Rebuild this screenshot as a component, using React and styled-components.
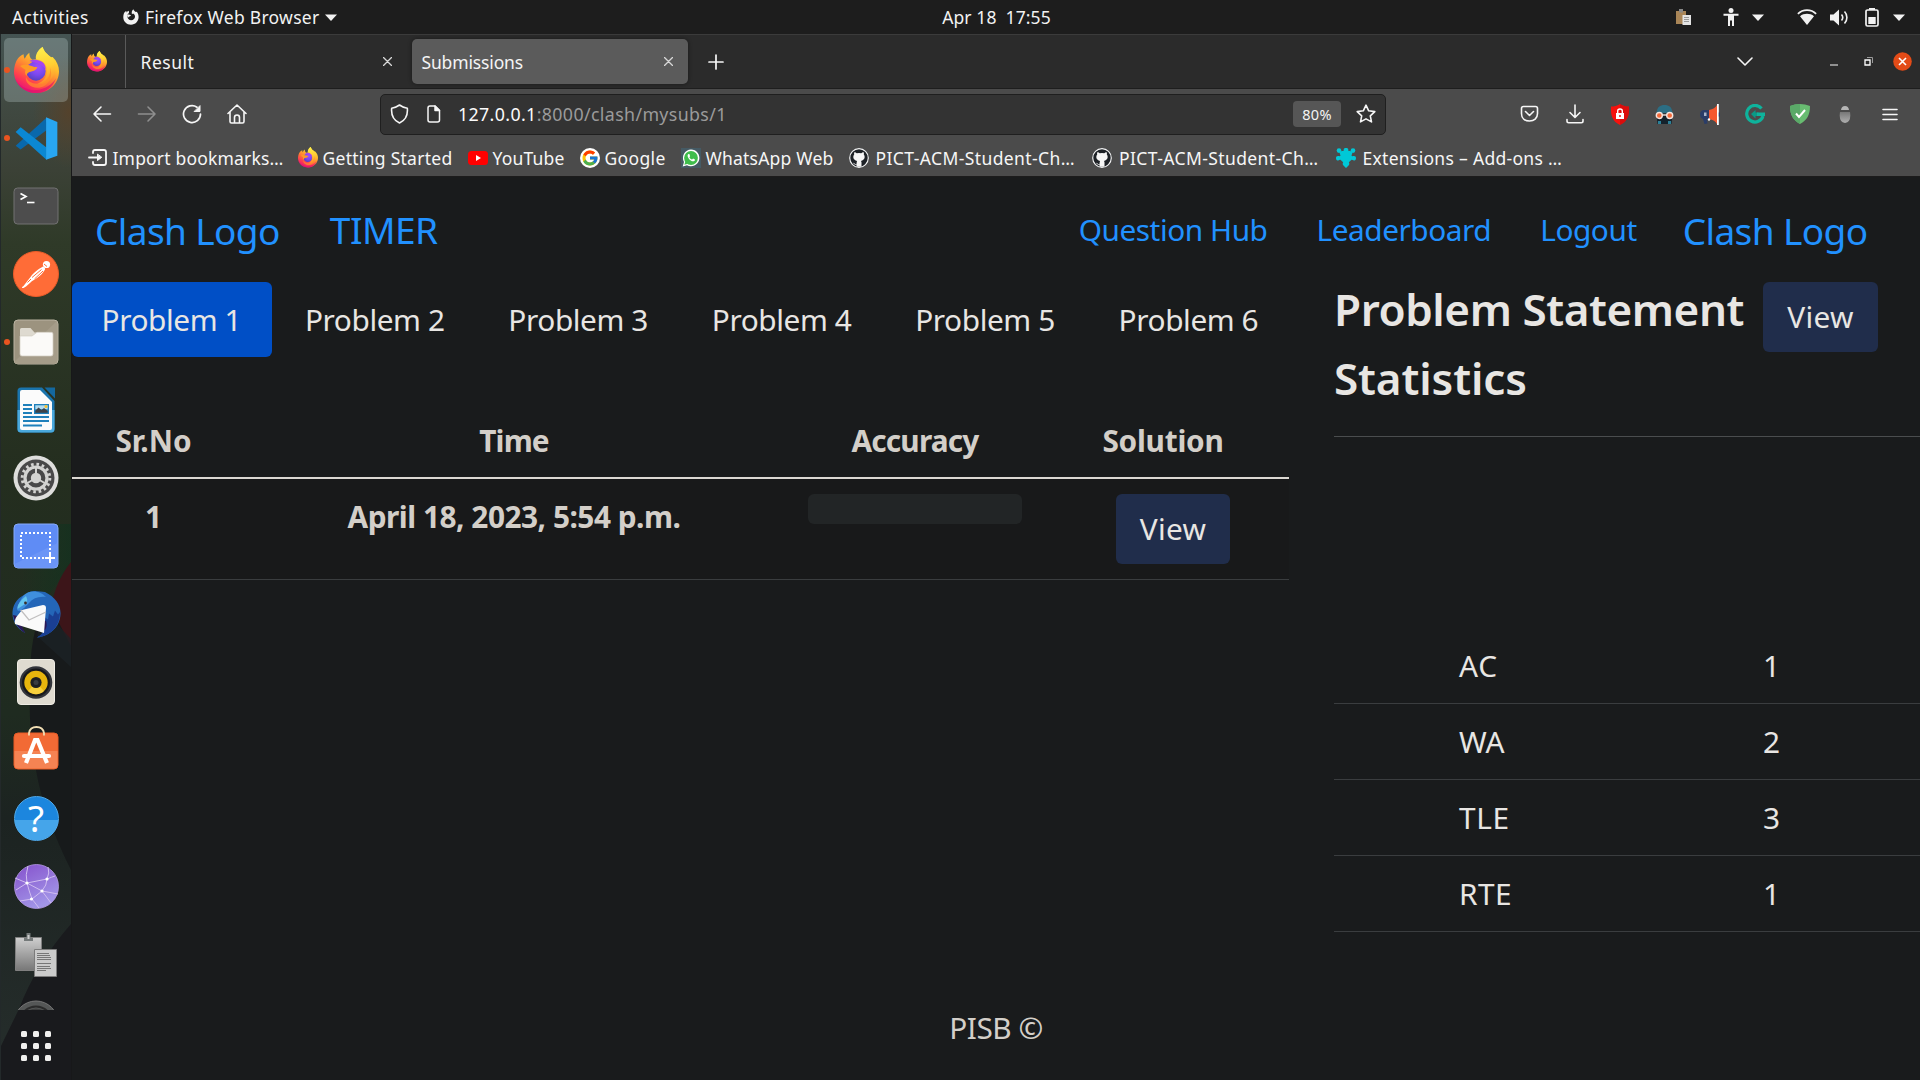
import React from "react";
import styled, { createGlobalStyle } from "styled-components";
import { FcGoogle } from "react-icons/fc";
import { FaGithub } from "react-icons/fa";

const Global = createGlobalStyle`
  *, *::before, *::after { box-sizing: border-box; }
  html, body { margin: 0; padding: 0; background: #1d1d1d; overflow: hidden; }
  body { font-family: "Noto Sans", "Open Sans", sans-serif; }
  svg { display: block; flex: none; }
`;

const Desktop = styled.div`
  width: 1920px;
  height: 1080px;
  display: grid;
  grid-template: 34px 1046px / 72px 1848px;
  overflow: hidden;
`;

/* ---------- system bar ---------- */
const SystemBar = styled.header`
  grid-column: 1 / -1;
  display: grid;
  grid-template-columns: 1fr auto 1fr;
  align-items: center;
  background: #1d1d1d;
  color: #f2f2f2;
  font-size: 17.5px;
  line-height: 34px;
`;
const SystemGroup = styled.div`
  display: flex;
  align-items: center;
  justify-content: ${(p) => (p.$end ? "flex-end" : "flex-start")};
  padding: ${(p) => (p.$end ? "0 15.5px 0 0" : "0 0 0 12px")};
`;
const SystemText = styled.span`
  white-space: pre;
  letter-spacing: ${(p) => p.$ls || 0}px;
  margin-left: ${(p) => p.$ml || 0}px;
`;
const Slot = styled.span`
  display: flex;
  margin-left: ${(p) => p.$ml || 0}px;
`;
const Clock = styled.div`
  display: flex;
  gap: 9px;
  margin-left: 73px;
  letter-spacing: 0.1px;
`;

/* ---------- dock ---------- */
const Dock = styled.nav`
  position: relative;
  display: flex;
  flex-direction: column;
  border-left: 1px solid #23292a;
  border-right: 1px solid #171819;
  background: #29332a;
`;
const Wallpaper = styled.div`
  position: absolute;
  inset: 0;
`;
const DockList = styled.div`
  position: relative;
  height: 976px;
  overflow: hidden;
  padding-top: 2px;
`;
const DockItem = styled.div`
  position: relative;
  height: 68.05px;
  display: flex;
  align-items: center;
  justify-content: center;
  padding-bottom: ${(p) => p.$lift || 0}px;
`;
const ActiveTile = styled.div`
  width: 64px;
  height: 64px;
  border-radius: 5px;
  background: rgba(215, 235, 235, 0.25);
  display: flex;
  align-items: center;
  justify-content: center;
`;
const RunningDot = styled.i`
  position: absolute;
  left: 3px;
  top: 31px;
  width: 6px;
  height: 6px;
  border-radius: 50%;
  background: #e95420;
`;
const AppGrid = styled.div`
  position: relative;
  display: grid;
  grid-template-columns: repeat(3, 6px);
  gap: 6px;
  margin: 21px 0 0 20px;
  & > i {
    width: 6px;
    height: 6px;
    border-radius: 1.5px;
    background: #f0f0ee;
  }
`;

/* ---------- browser chrome ---------- */
const Browser = styled.main`
  display: flex;
  flex-direction: column;
  background: #191b1c;
  min-width: 0;
`;
const TabStrip = styled.div`
  height: 55px;
  display: flex;
  align-items: center;
  background: #2b2b2b;
  border-top: 1px solid #3b3b3b;
  border-bottom: 1px solid #1e1e1e;
  color: #f4f4f4;
  font-size: 17.5px;
`;
const PinnedTab = styled.div`
  width: 54px;
  height: 53px;
  display: flex;
  align-items: center;
  padding-left: 15px;
  border-right: 1px solid #5a5a5a;
`;
const BrowserTab = styled.div`
  width: ${(p) => p.$w}px;
  height: 45px;
  margin-left: ${(p) => p.$ml}px;
  padding: 0 ${(p) => p.$pr}px 0 ${(p) => p.$pl}px;
  display: flex;
  align-items: center;
  justify-content: space-between;
  border-radius: 5px;
  background: ${(p) => (p.$active ? "#5b5b5b" : "transparent")};
  box-shadow: ${(p) => (p.$active ? "0 0 4px rgba(0,0,0,.45)" : "none")};
  letter-spacing: ${(p) => p.$ls}px;
`;
const WindowButtons = styled.div`
  margin-left: auto;
  display: flex;
  align-items: center;
`;
const Toolbar = styled.div`
  height: 50px;
  display: flex;
  align-items: center;
  background: #4b4b4b;
`;
const AddressBar = styled.div`
  width: 1006px;
  height: 41px;
  margin-left: 133.5px;
  padding: 0 9px;
  display: flex;
  align-items: center;
  background: #333333;
  border: 1px solid #1f1f1f;
  border-radius: 5px;
  font-size: 17.8px;
  letter-spacing: 0.37px;
  color: #9b9b9b;
  white-space: pre;
  & > b {
    font-weight: 400;
    color: #fbfbfb;
    margin-left: 17px;
  }
`;
const ZoomBadge = styled.span`
  margin: 0 15px 0 auto;
  width: 48px;
  height: 26px;
  line-height: 27px;
  border-radius: 4px;
  background: #565656;
  color: #f4f4f4;
  font-size: 14.5px;
  text-align: center;
`;
const ExtensionRow = styled.div`
  margin-left: 121px;
  display: flex;
  & > span {
    width: 45px;
    display: flex;
    justify-content: center;
    align-items: center;
  }
`;
const BookmarksBar = styled.div`
  height: 38px;
  display: flex;
  align-items: center;
  background: #4b4b4b;
  border-bottom: 1px solid #1c1c1c;
  padding: 0 0 0 15.5px;
  color: #f6f6f6;
  font-size: 17.5px;
`;
const Bookmark = styled.div`
  width: ${(p) => p.$w}px;
  display: flex;
  align-items: center;
  gap: 5px;
  letter-spacing: ${(p) => p.$ls}px;
  white-space: nowrap;
`;

/* ---------- page ---------- */
const Page = styled.section`
  flex: 1;
  display: flex;
  flex-direction: column;
  background: #191b1c;
  color: #e8e6e3;
  font-size: 29.8px;
  line-height: 46px;
`;
const NavBar = styled.div`
  height: 105px;
  display: flex;
  align-items: center;
  padding: 0 52.5px 0 23px;
  color: #2191ff;
`;
const Brand = styled.a`
  font-size: 37px;
  letter-spacing: -0.6px;
  padding-top: 2px;
  margin-left: ${(p) => p.$ml || 0}px;
`;
const Timer = styled.a`
  font-size: 37px;
  letter-spacing: -0.5px;
  margin: 0 auto 0 50px;
`;
const NavLink = styled.a`
  letter-spacing: -0.45px;
  margin-left: ${(p) => p.$ml || 0}px;
`;
const Columns = styled.div`
  display: flex;
  height: 714px;
`;
const Submissions = styled.div`
  width: 1217px;
`;
const ProblemTabs = styled.div`
  display: flex;
  gap: 3.5px;
`;
const ProblemTab = styled.div`
  width: 200px;
  height: 75px;
  line-height: 75px;
  padding-left: 29.5px;
  border-radius: 6px;
  letter-spacing: -0.4px;
  white-space: nowrap;
  background: ${(p) => (p.$active ? "#004fc6" : "transparent")};
`;
const Row = styled.div`
  display: grid;
  grid-template-columns: 163px 558px 244px 252px;
  color: #d3cfc9;
  font-weight: 700;
`;
const HeadRow = styled(Row)`
  margin-top: 45px;
  padding: 15.6px 0 13.4px;
  border-bottom: 2px solid #dbd8d2;
`;
const BodyRow = styled(Row)`
  height: 101px;
  padding-top: 15px;
  background: #18191a;
  border-bottom: 1px solid #3a3d3f;
`;
const Cell = styled.div`
  text-align: center;
  letter-spacing: ${(p) => p.$ls || 0}px;
`;
const AccuracyTrack = styled.div`
  height: 30px;
  margin: 0 15px;
  border-radius: 6px;
  background: #222526;
`;
const ViewButton = styled.div`
  width: ${(p) => p.$w}px;
  height: 70px;
  line-height: 69px;
  margin-left: ${(p) => p.$ml || 0}px;
  border-radius: 6px;
  background: #202d4b;
  color: #e8e6e3;
  font-weight: 400;
  text-align: center;
  letter-spacing: 0.3px;
`;
const Stats = styled.aside`
  margin-left: 45px;
  width: 586px;
`;
const StatsHead = styled.div`
  display: flex;
  height: 155px;
  border-bottom: 1px solid #4a4d4e;
`;
const Heading = styled.h2`
  width: 429px;
  margin: -7px 0 0;
  font-size: 44px;
  font-weight: 600;
  line-height: 69px;
  letter-spacing: ${(p) => p.$ls}px;
  white-space: pre;
`;
const HeadingLine = styled.span`
  display: block;
  letter-spacing: ${(p) => p.$ls}px;
`;
const StatList = styled.div`
  margin-top: 191px;
`;
const StatRow = styled.div`
  display: grid;
  grid-template-columns: 304px 1fr;
  height: 76px;
  line-height: 75px;
  padding-left: 125px;
  border-bottom: 1px solid #3a3d3f;
  & > :first-child { letter-spacing: ${(p) => p.$ls || 0}px; }
`;
const Footer = styled.footer`
  margin-top: 9px;
  text-align: center;
  letter-spacing: -0.5px;
  color: #d3cfc9;
`;

/* ---------- icons ---------- */
const Firefox = ({ size, id }) => (
  <svg width={size} height={(size * 138) / 135} viewBox="0 0 135 138">
    <defs>
      <linearGradient id={id + "a"} x1=".8" y1=".1" x2=".3" y2="1">
        <stop offset="0" stopColor="#ffe63a" />
        <stop offset=".3" stopColor="#ffb92c" />
        <stop offset=".55" stopColor="#ff7a35" />
        <stop offset=".78" stopColor="#ff3b50" />
        <stop offset="1" stopColor="#e4107c" />
      </linearGradient>
      <radialGradient id={id + "b"} cx=".6" cy=".3" r=".8">
        <stop offset="0" stopColor="#a34dfb" />
        <stop offset=".5" stopColor="#7a48ee" />
        <stop offset="1" stopColor="#4c3fb5" />
      </radialGradient>
      <linearGradient id={id + "c"} x1=".5" y1="0" x2=".6" y2="1">
        <stop offset="0" stopColor="#fff04c" />
        <stop offset=".5" stopColor="#ffcf33" />
        <stop offset="1" stopColor="#ff8a2c" />
      </linearGradient>
    </defs>
    <path fill={`url(#${id}a)`} d="M5 47C9 38 14 28 29 22c0 6 1 10 3 13 4-8 8-14 14-18 0 9 2 17 9 21l22-3C64 25 72 8 86 0c4 15 15 22 25 31l5-1c13 13 19 28 19 43 0 37-30 65-67 65S0 110 0 74c0-10 2-19 5-27z" />
    <circle cx="66" cy="72" r="29" fill={`url(#${id}b)`} />
    <path fill="#a645f0" d="M46 42c10-6 30-5 40 4 6 5 9 12 9 20-8-9-20-17-49-24z" />
    <path fill="#ff9a26" d="M18 57c12-6 27-4 37 1 5 2 10 2 15 3-3 9-12 12-24 14-5 2-8 7-8 12-6-6-6-13-3-18-5-3-11-7-17-12z" />
    <path fill={`url(#${id}c)`} d="M86 0c-14 8-23 24-20 37 12 0 29 8 32 26 3 24-8 41-28 47 25 4 46-12 51-33 3-14 1-29-5-42l-5-4C101 22 90 15 86 0z" />
    <path fill="#ff8b2c" opacity=".75" d="M108 62c4 25-12 47-38 48-18 0-30-9-34-20-3 16 12 32 34 32 32 0 49-31 38-60z" />
    <path fill="#e0116f" opacity=".7" d="M3 93c12 26 38 39 66 36 25-3 46-16 57-35-9 26-31 44-58 44C38 138 11 121 3 93z" />
  </svg>
);

const FirefoxMono = () => (
  <svg width="16" height="16" viewBox="0 0 16 16">
    <path fill="#f2f2f2" d="M.6 5.5C1 3.8 2 2.6 3.300 2l.3 1.500C4.200 2.500 5 2 5.800 1.800L6 3.900c-.8.500-1.800 1.300-1.800 3.200 0 2.500 1.800 4.200 4 4.200 2.300 0 3.800-1.700 3.800-3.700 0-1.500-.8-2.500-2-3L9 5.200C8.300 3.600 8.900 1.300 10.400.2c.4 1.400 1.300 1.900 2.400 2.900l.9-.3c1.200 1.300 1.900 3.200 1.900 5.200 0 4.300-3.300 7.700-7.600 7.700S.300 12.400.300 8.200c0-1 .1-1.900.3-2.700z" />
    <path fill="#f2f2f2" d="M4 5.800c1.500-.6 2.700-.3 4 .5-.3 1-1.300 1-2.400 1.600L4.800 9z" />
  </svg>
);
const Caret = () => (
  <svg width="12" height="7" viewBox="0 0 12 7"><path fill="#f2f2f2" d="M0 .5h12L6 7z" /></svg>
);
const TrayClipboard = () => (
  <svg width="15" height="16" viewBox="0 0 15 16">
    <path fill="#a98557" d="M0 2h10v13H0z" /><path fill="#888" d="M3 0h4v3.500H3z" />
    <path fill="#e4e4e4" d="M6.500 6H15v10H6.500z" /><path stroke="#999" d="M8 8.500h5M8 10.500h5M8 12.500h5" />
  </svg>
);
const Accessibility = () => (
  <svg width="16" height="18" viewBox="0 0 16 18" fill="#f2f2f2">
    <circle cx="8" cy="2.500" r="2.500" /><path d="M.5 5.800h15v1.900H11V18H9v-5.500H7V18H5V7.700H.5z" />
  </svg>
);
const Wifi = () => (
  <svg width="20" height="16" viewBox="0 0 20 16">
    <path fill="#f2f2f2" d="M10 16 3 7.200c4-3.200 10-3.200 14 0z" />
    <path fill="none" stroke="#f2f2f2" strokeWidth="1.800" d="M.9 4.800c5-4.800 13.200-4.800 18.200 0" />
  </svg>
);
const Volume = () => (
  <svg width="19" height="17" viewBox="0 0 19 17">
    <path fill="#f2f2f2" d="M0 5.500h3.500L9 .5v16l-5.500-5H0z" />
    <path fill="none" stroke="#f2f2f2" strokeWidth="1.600" d="M11.500 5.500c1.500 1.800 1.500 4.200 0 6M14.500 2.500c3.200 3.300 3.200 8.700 0 12" />
  </svg>
);
const Battery = () => (
  <svg width="14" height="19" viewBox="0 0 14 19">
    <path fill="#f2f2f2" d="M4 0h6v2H4zM3.300 9h7.400v7H3.300z" />
    <rect x="1" y="2" width="12" height="16" rx="1.500" fill="none" stroke="#f2f2f2" strokeWidth="1.700" />
  </svg>
);

const Line = ({ w = 20, h = 20, sw = 1.6, color = "#f6f6f6", d, children }) => (
  <svg width={w} height={h} viewBox={`0 0 ${w} ${h}`} fill="none" stroke={color} strokeWidth={sw} strokeLinecap="round" strokeLinejoin="round">
    {d && <path d={d} />}
    {children}
  </svg>
);

const VsCode = () => (
  <svg width="43" height="43" viewBox="0 0 128 130">
    <path fill="#0968ab" d="M1 87 16 98 94 40V2z" />
    <path fill="#0b88d3" d="M1 45 16 31l78 61v37z" />
    <path fill="#28a6f2" d="M93 1l34 14v102l-34 12z" />
  </svg>
);
const Terminal = () => (
  <svg width="46" height="38" viewBox="0 0 46 38">
    <rect x="1" y="1" width="44" height="36" rx="3.500" fill="#4d4d4d" stroke="#727272" />
    <path d="M7.500 6.500l5.500 3-5.500 3" fill="none" stroke="#fff" strokeWidth="1.700" /><path d="M14 15.500h7.500" stroke="#fff" strokeWidth="1.600" />
  </svg>
);
const Postman = () => (
  <svg width="46" height="46" viewBox="0 0 46 46">
    <circle cx="23" cy="23" r="22.500" fill="#ff6c37" stroke="#e95b29" />
    <circle cx="33.500" cy="13.500" r="3.600" fill="#fff" />
    <path fill="#fff" d="M30 15.500c1.500 1 2.500 2 2 3-1.500 3-5 6.500-8 8.500-2.500 2-5 2.500-6.500 4.500L13 35.500l-2.500 1.500H9c0-1 .6-1.500 1.500-2l7-9C19.500 22.500 26 17.500 30 15.500z" />
    <path stroke="#ff6c37" d="M19 26.500l9.500-8M21.500 28l8.500-8M31 13l3 2.500M14.500 31.500l3.500-3.500" />
  </svg>
);
const Files = () => (
  <svg width="46" height="46" viewBox="0 0 46 46">
    <rect x="1" y="1" width="44" height="44" rx="4" fill="#9c937f" stroke="#bcb4a3" />
    <path d="M1 43 44 2v40q0 3-3 3H4z" fill="#a59c89" />
    <path fill="#dedad0" d="M7 10.500q0-1.500 1.500-1.500h9l4 4.500H36V20H7z" />
    <path fill="#fbfaf8" stroke="#d2cdc2" strokeWidth=".7" d="M7 17h12l5-3.700h14.500Q40 13.300 40 15v20q0 2-2 2H9q-2 0-2-2z" />
  </svg>
);
const Writer = () => (
  <svg width="38" height="46" viewBox="0 0 38 46">
    <path fill="#1a74ad" d="M4 .5h21L37.500 14v28q0 3.500-3.500 3.500H4Q.500 45.500.500 42V4Q.500.500 4 .5z" />
    <path fill="#4aa9dd" d="M.5 23h37v19q0 3.500-3.500 3.500H4Q.500 45.500.500 42z" />
    <path fill="#fbfbfb" d="M5 3h18l12 12v26q0 2-2 2H5q-2 0-2-2V5q0-2 2-2z" />
    <path fill="#14689f" d="M27.500.500H38v11z" />
    <path fill="#1f80bb" d="M6 17h9v2H6zM6 21h9v2H6zM6 25h9v2H6zM6 29h26v2H6zM6 33h26v2H6zM6 37.500h19v2H6z" />
    <path fill="#1f80bb" d="M17 17h15v10H17z" /><path fill="#b3dcf1" d="M18.300 18.300h12.400v4H18.300z" />
    <path fill="#3e4247" d="M18.300 25.700v-2l3.200-3.200 3 2.500 2.500-2 3.700 3v1.700z" /><circle cx="29" cy="19.500" r="1.500" fill="#f6c22d" />
  </svg>
);
const Gear = () => (
  <svg width="46" height="46" viewBox="0 0 46 46">
    <circle cx="23" cy="23" r="22.500" fill="#dededc" /><circle cx="23" cy="23" r="18.500" fill="#494949" />
    <circle cx="23" cy="23" r="13.800" fill="none" stroke="#d3d3d1" strokeWidth="3" strokeDasharray="2.600 2.820" />
    <circle cx="23" cy="23" r="11" fill="none" stroke="#d3d3d1" strokeWidth="3.200" />
    <path stroke="#d3d3d1" strokeWidth="2" d="M23 23V12M23 23l9.500 5.500M23 23l-9.500 5.500" />
    <circle cx="23" cy="23" r="5.200" fill="#d3d3d1" />
  </svg>
);
const Screenshot = () => (
  <svg width="46" height="46" viewBox="0 0 46 46">
    <rect x="1" y="1" width="44" height="44" rx="4" fill="#5f8cf5" stroke="#86a9fb" />
    <path d="M1.500 41 44.500 20v21q0 3.500-3.500 3.500H5q-3.500 0-3.500-3.500z" fill="#7098f7" opacity=".7" />
    <rect x="8" y="10" width="29" height="25" fill="none" stroke="#fff" strokeWidth="2" strokeDasharray="2 2" />
    <path d="M32 35h10M37 30v10" stroke="#fff" strokeWidth="2" />
  </svg>
);
const Thunderbird = () => (
  <svg width="49" height="48" viewBox="0 0 49 48">
    <path fill="#2466b8" d="M15 4C20-1 28 2 33 2c10 5 16 13 15.500 22C48 37 38 46 25 47.500c4-2 6-4 7-7L8 35l5 8C4 38 0 30 .5 22 1 13 7 6 15 4z" />
    <path fill="#1a3f93" d="M48 22c0 14-9 24-23 25.500 8-4 9-13 8-20l3 2 1-6 4 3 2-6 3 4z" />
    <path fill="#2b1857" d="M1 25c2 9 6 14 12 18l-4-9 12 4 12 2c2-3 2-6 1-9L10 27z" />
    <path fill="#fafafa" d="M10 20 31 15q3 0 3 3l-2 25L3 34q-1-5 3-9z" />
    <path fill="none" stroke="#c1bfbf" strokeWidth="1.300" d="M8 19l9 11 17-8" />
    <path fill="#3f8fdd" d="M12 5C18-1 29 1 34 7c-7-1-13 1-17 6l-5 5-5 3-2-1c1-5 3-10 7-15z" />
    <path fill="#63c4ee" d="M14 6c-6 5-9 9-8.500 13l9-6C16 11 15 8 14 6z" /><circle cx="13.500" cy="13" r="1.400" fill="#3c2f2b" />
  </svg>
);
const Speaker = () => (
  <svg width="38" height="46" viewBox="0 0 38 46">
    <rect x=".5" y=".5" width="37" height="45" rx="3.500" fill="#dfdbd0" stroke="#efece4" />
    <circle cx="19" cy="23.500" r="16.300" fill="#33353b" /><circle cx="19" cy="23.500" r="14" fill="#18191c" />
    <circle cx="19" cy="23.500" r="11.700" fill="#e7b50d" /><path fill="#f7cf3d" d="M19 23.500l-8 8.500a11.700 11.700 0 0 0 16 0z" />
    <circle cx="19" cy="23.500" r="5.600" fill="#1e1f22" /><circle cx="19" cy="23.500" r="2.500" fill="#3a3c40" />
  </svg>
);
const Software = () => (
  <svg width="46" height="44" viewBox="0 0 46 44">
    <rect x="1" y="7" width="44" height="36" rx="4" fill="#f26a35" stroke="#e85a26" /><path fill="#f58353" d="M1.500 25h43v14q0 3.500-3.500 3.500H5Q1.500 42.500 1.500 39z" />
    <path fill="none" stroke="#f2dfb5" strokeWidth="1.800" d="M16 9.500V7q1-6 7.500-6T31 7v2.500" />
    <path d="M13 37l9-23h2.500L34 37" fill="none" stroke="#fff" strokeWidth="4.200" /><path d="M11 30h25" stroke="#fff" strokeWidth="4.200" strokeLinecap="round" />
  </svg>
);
const HelpDisc = styled.div`
  width: 45px;
  height: 45px;
  border-radius: 50%;
  border: 1px solid #4faaec;
  background: linear-gradient(#1c86de 54%, #45a5ea 54%);
  color: #fff;
  font: 37px/42px "Noto Sans", sans-serif;
  text-align: center;
`;
const Web = () => (
  <svg width="45" height="45" viewBox="0 0 45 45">
    <defs><linearGradient id="web" x1="0" y1="0" x2=".5" y2="1"><stop offset="0" stopColor="#8550cc" /><stop offset="1" stopColor="#a296e8" /></linearGradient></defs>
    <circle cx="22.500" cy="22.500" r="22" fill="url(#web)" stroke="#b69be6" strokeWidth=".8" />
    <path fill="none" stroke="#d0bdf0" d="M14 2q-3 9-1 17t5 16l7 9M13 19l20-4q5-2 8-3M13 19 1 14M13 19l-11 7M13 19l15 8 16 3M33 15q3-6 1-12M33 15q0 6-5 12l-10 8-12 2M28 27l9 12" />
    <g fill="#fff"><circle cx="13" cy="19" r="1.600" /><circle cx="33" cy="15" r="1.600" /><circle cx="28" cy="27" r="1.600" /><circle cx="17.500" cy="35" r="1.600" /></g>
  </svg>
);
const Clipboards = () => (
  <svg width="42" height="44" viewBox="0 0 42 44">
    <defs><linearGradient id="clip" x1="0" y1="0" x2="0" y2="1"><stop offset="0" stopColor="#cfcfcf" /><stop offset="1" stopColor="#777" /></linearGradient></defs>
    <path fill="url(#clip)" stroke="#808080" d="M.5 4.500h26v33H.500z" /><path fill="#757a7a" d="M9 8V5h2.500V0h4v5H18v3z" /><path fill="#ccc" d="M12.500 2h2v4h-2z" />
    <path fill="#cbcbcb" stroke="#7c7c7c" d="M19.500 16.500h22v27h-22z" /><path stroke="#777" d="M22 20.500h12M22 22.500h13M22 24.500h14M22 26.500h14M22 30.500h14M22 33.500h13M22 35.500h14M22 37.500h9" />
  </svg>
);
const Disc = () => (
  <svg width="46" height="46" viewBox="0 0 46 46">
    <circle cx="23" cy="23" r="22" fill="#555757" stroke="#777" /><circle cx="23" cy="23" r="16.500" fill="none" stroke="#2b2b2b" strokeWidth="2" /><circle cx="23" cy="23" r="14.500" fill="#3d3e3e" />
  </svg>
);

const DockArt = () => (
  <svg width="70" height="1046" viewBox="0 0 70 1046" preserveAspectRatio="none">
    <defs>
      <linearGradient id="wall" x1="0" y1="0" x2="0" y2="1">
        <stop offset="0" stopColor="#455453" /><stop offset=".06" stopColor="#414a43" /><stop offset=".13" stopColor="#3b4136" />
        <stop offset=".2" stopColor="#2f3a28" /><stop offset=".42" stopColor="#242e1f" /><stop offset=".65" stopColor="#1f2b20" />
        <stop offset=".75" stopColor="#1c2321" /><stop offset="1" stopColor="#262e2c" />
      </linearGradient>
      <radialGradient id="rust"><stop offset="0" stopColor="#54422c" /><stop offset="1" stopColor="#54422c" stopOpacity="0" /></radialGradient>
      <linearGradient id="leaf" x1="0" y1="0" x2="1" y2="0"><stop offset=".3" stopColor="#10381f" stopOpacity="0" /><stop offset="1" stopColor="#12321f" /></linearGradient>
    </defs>
    <path fill="url(#wall)" d="M0 0h70v1046H0z" />
    <ellipse cx="68" cy="78" rx="36" ry="56" fill="url(#rust)" />
    <path fill="url(#leaf)" d="M0 490h70v40L45 565 0 600z" opacity=".7" />
    <path fill="#3c1519" d="M70 528Q52 550 48 585L70 615z" />
    <path fill="#171a1b" d="M47 568Q30 590 29 640q-2 60 6 96 8 46 35 100V612z" />
    <path fill="#1c2226" d="M42 575l28 30v28L36 602z" opacity=".8" />
    <path fill="#191a1d" d="M70 890Q35 930 18 975L0 1012v34h70z" />
  </svg>
);

const dockItems = [
  { icon: <ActiveTile><Firefox size={45} id="dock" /></ActiveTile>, running: true },
  { icon: <VsCode />, running: true },
  { icon: <Terminal /> },
  { icon: <Postman /> },
  { icon: <Files />, running: true },
  { icon: <Writer /> },
  { icon: <Gear /> },
  { icon: <Screenshot /> },
  { icon: <Thunderbird /> },
  { icon: <Speaker /> },
  { icon: <Software />, lift: 4 },
  { icon: <HelpDisc>?</HelpDisc> },
  { icon: <Web /> },
  { icon: <Clipboards /> },
  { icon: <Disc /> },
];

const Import = () => (
  <Line w={20} h={18} sw={1.8} d="M5 4V3q0-2 2-2h9q2 0 2 2v11q0 2-2 2H7q-2 0-2-2v-1M1 8.500h10"><path d="M9.500 5.500v6l4-3z" fill="#f6f6f6" strokeWidth="1" /></Line>
);
const YouTube = () => (
  <svg width="20" height="20" viewBox="0 0 20 20"><rect y="3" width="20" height="14" rx="3.500" fill="#f00" /><path fill="#fff" d="M8 7l5 3-5 3z" /></svg>
);
const RoundBadge = styled.span`
  width: 20px;
  height: 20px;
  border-radius: ${(p) => (p.$square ? 0 : "50%")};
  background: ${(p) => p.$bg};
  color: ${(p) => p.$fg || "#fff"};
  display: flex;
  align-items: center;
  justify-content: center;
`;
const WhatsApp = () => (
  <RoundBadge $square $bg="#455a64">
    <svg width="18" height="18" viewBox="0 0 18 18"><path fill="#fff" d="M9 .5a8.400 8.400 0 1 1-4 15.800L.700 17.500 2 13A8.400 8.400 0 0 1 9 .5z" /><circle cx="9" cy="9" r="6.900" fill="#3fbd4c" /><path fill="#3fbd4c" d="M2.300 15.800 3.500 12l2.600 2.700z" /><path fill="#fff" d="M6.500 5c-1.300.8-1.200 2.600.2 4.500s3.400 3.200 5 2.800c1-.3 1.400-1.200 1.200-1.800l-1.800-.9-1 1c-1.300-.5-2.100-1.300-2.700-2.400l.7-1L7.400 5z" /></svg>
  </RoundBadge>
);
const GitHub = () => (
  <RoundBadge $bg="#1d2126" $fg="#f4f4f4">
    <svg width="20" height="20" viewBox="0 0 20 20">
      <circle cx="10" cy="10" r="9.300" fill="#1d2126" stroke="#f4f4f4" strokeWidth="1.200" />
      <path fill="#f6f6f6" d="M5.300 4.300c1 0 1.900.5 2.500 1a9 9 0 0 1 4.400 0c.6-.5 1.500-1 2.500-1 .3 1 .3 1.700.1 2.300 1.600 1.900 1.200 5.700-2.900 6.300.5.500.6 1 .6 1.700v3.800q-2.500.9-5 0v-1.800c-2.200.4-2.600-.8-3.500-1.900.9-.2 1.600 1 2.300 1.200.5.100 1 0 1.300-.2 0-.9.200-2.300.5-2.800-4.100-.6-4.500-4.400-2.900-6.300-.2-.6-.2-1.300.1-2.300z" />
    </svg>
  </RoundBadge>
);
const Puzzle = () => (
  <svg width="20" height="20" viewBox="0 0 20 20" fill="#00c8d7">
    <circle cx="3" cy="2.600" r="2.300" /><circle cx="17" cy="2.600" r="2.300" />
    <path d="M3.500 4.500 6 2.800C7 3.500 8 3 7.700 1.800 7.600.5 8.500 0 10 0s2.400.5 2.300 1.800C12 3 13 3.500 14 2.800l2.500 1.700-1 3c.3 1.200 1.500.5 2.500.500 1.300 0 2 .8 2 2.200s-.9 2.300-2.200 2.300c-1 0-1.800-1-2.500-.5l-2.500 2.300c.5.800.7 1.700.2 2.700L10 20l-3-3c-.5-1-.3-1.900.2-2.700L4.700 12c-.7-.5-1.500.5-2.500.5C.9 12.500 0 11.600 0 10.200S.700 8 2 8c1 0 2.200.7 2.500-.5z" />
  </svg>
);

const bookmarks = [
  { icon: <Import />, label: "Import bookmarks…", w: 210, ls: 0.18 },
  { icon: <Firefox size={20} id="bm" />, label: "Getting Started", w: 170, ls: 0.28 },
  { icon: <YouTube />, label: "YouTube", w: 112, ls: 0.19 },
  { icon: <RoundBadge $bg="#fff"><FcGoogle size={18} /></RoundBadge>, label: "Google", w: 101, ls: 0.36 },
  { icon: <WhatsApp />, label: "WhatsApp Web", w: 168, ls: 0.22 },
  { icon: <GitHub />, label: "PICT-ACM-Student-Ch…", w: 243.5, ls: 0.4, gap: 7 },
  { icon: <GitHub />, label: "PICT-ACM-Student-Ch…", w: 243.5, ls: 0.4, gap: 7 },
  { icon: <Puzzle />, label: "Extensions – Add-ons …", w: 260, ls: 0.3, gap: 7 },
];
const BookmarkIcon = styled.span`
  display: flex;
  margin-right: ${(p) => (p.$gap || 5) - 5}px;
`;

const Pocket = () => <Line w={19} h={18} d="M3.500 1.500h12q2 0 2 2v5c0 5-3.500 7.500-8 7.500s-8-2.500-8-7.500v-5q0-2 2-2zM5.500 6.500l4 4 4-4" />;
const Download = () => <Line w={18} h={20} d="M9 1v12M4 8.500l5 5 5-5M1 15.500v1.500q0 1.700 1.700 1.700h12.600q1.700 0 1.700-1.700v-1.500" />;
const LockShield = () => (
  <svg width="20" height="21" viewBox="0 0 20 21"><path fill="#f5120e" d="M10 0c3 2 6 2.500 9 2.500.5 9-1.500 15-9 18.500C2.500 17.500.5 11.500 1 2.500 4 2.500 7 2 10 0z" /><path fill="#c80a0c" d="M10 0c3 2 6 2.500 9 2.500.5 9-1.500 15-9 18.500z" opacity=".6" /><path fill="#fff" d="M6 9h8v6H6z" /><path fill="none" stroke="#fff" strokeWidth="1.400" d="M7.700 9V7q0-2 2.300-2t2.300 2v2" /><circle cx="10" cy="12" r="1" fill="#e11" /></svg>
);
const Spy = () => (
  <svg width="19" height="20" viewBox="0 0 19 20"><path fill="#2c6e84" d="M1.500 9C2 3 5 1 9.500 1S17 3 17.500 9z" /><path fill="#14222c" d="M1.500 9.500h16L16.500 20h-14z" /><path fill="#2a8199" d="M3 17h3v3H3zM13 17h3v3h-3z" /><path stroke="#f6e5df" strokeWidth="1.400" d="M7 11h5" /><g fill="#f26a3a" stroke="#f6e5df" strokeWidth="1.400"><circle cx="4.300" cy="11.500" r="3" /><circle cx="14.700" cy="11.500" r="3" /></g></svg>
);
const Megaphone = () => (
  <svg width="20" height="21" viewBox="0 0 20 21"><path fill="#2a3d68" d="M3 6h6v9l-2 1 .5 3.500-3 .5L3 15Q0 14 0 10.500T3 6z" /><path fill="#f4572f" d="M9 6q6-1 8-5v19q-2-4-8-5z" /><path fill="#fff" d="M17 0h1.800v21H17z" /><path fill="#aab4c8" d="M4 8.500h2.500v3.500H4z" /><circle cx="9" cy="15.500" r="1.200" fill="#fff" /><path fill="#2a3d68" d="M18.800 8.500h1.200v4h-1.200z" /></svg>
);
const Grammarly = () => (
  <svg width="20" height="20" viewBox="0 0 20 20"><path fill="none" stroke="#0eb39c" strokeWidth="3.200" d="M16.500 4.500A8.300 8.300 0 1 0 18 12" /><path fill="#0a9a87" d="M10.500 6 6 10l4.500 4.500V12h3v-3.500h-3z" /><path fill="#0eb39c" d="M12 8.500h8v3.500h-8z" /></svg>
);
const CheckShield = () => (
  <svg width="20" height="20" viewBox="0 0 20 20"><path fill="#68bc71" d="M10 0c3 0 7 .8 10 2 0 9-3 14-10 18C3 16 0 11 0 2 3 .8 7 0 10 0z" /><path fill="#5aa968" d="M10 0v20C3 16 0 11 0 2 3 .8 7 0 10 0z" /><path fill="none" stroke="#fff" strokeWidth="2" d="M6 9.500l3 3.500 6-7" /></svg>
);
const Bug = () => (
  <svg width="12" height="17" viewBox="0 0 12 17">
    <defs><linearGradient id="bug" x1="0" y1="0" x2="0" y2="1"><stop offset="0" stopColor="#777" /><stop offset="1" stopColor="#b0b0b0" /></linearGradient></defs>
    <path fill="#b5b5b5" d="M2 4Q2.500 0 6 0t4 4z" /><path fill="url(#bug)" d="M1 6h10q1.500 10-5 11Q-.5 16 1 6z" />
  </svg>
);
const Close = () => <Line w={9} h={9} sw={1.3} color="#d8d8d8" d="M.5.5l8 8M8.500.5l-8 8" />;

export default function App() {
  return (
    <>
      <Global />
      <Desktop>
        <SystemBar>
          <SystemGroup>
            <SystemText $ls={0.4}>Activities</SystemText>
            <Slot $ml={34}><FirefoxMono /></Slot>
            <SystemText $ml={6} $ls={0.28}>Firefox Web Browser</SystemText>
            <Slot $ml={5.500}><Caret /></Slot>
          </SystemGroup>
          <Clock><span>Apr 18</span><span>17:55</span></Clock>
          <SystemGroup $end>
            <TrayClipboard />
            <Slot $ml={32}><Accessibility /></Slot>
            <Slot $ml={13}><Caret /></Slot>
            <Slot $ml={33}><Wifi /></Slot>
            <Slot $ml={13}><Volume /></Slot>
            <Slot $ml={15.500}><Battery /></Slot>
            <Slot $ml={14}><Caret /></Slot>
          </SystemGroup>
        </SystemBar>

        <Dock>
          <Wallpaper><DockArt /></Wallpaper>
          <DockList>
            {dockItems.map((item, i) => (
              <DockItem key={i} $lift={item.lift}>
                {item.running && <RunningDot />}
                {item.icon}
              </DockItem>
            ))}
          </DockList>
          <AppGrid>{Array.from({ length: 9 }, (_, i) => <i key={i} />)}</AppGrid>
        </Dock>

        <Browser>
          <TabStrip>
            <PinnedTab><Firefox size={20} id="pin" /></PinnedTab>
            <BrowserTab $w={274} $ml={0} $pl={14.500} $pr={8.500} $ls={0.5}>Result<Close /></BrowserTab>
            <BrowserTab $w={276} $ml={12} $pl={9.500} $pr={15.500} $ls={-0.15} $active>Submissions<Close /></BrowserTab>
            <Slot $ml={19.500}><Line w={16} h={16} sw={1.7} d="M8 1v14M1 8h14" /></Slot>
            <WindowButtons>
              <Line w={16} h={9} d="M1 1l7 7 7-7" />
              <Slot $ml={77}><Line w={8} h={10} sw={1.200} d="M0 8h8" /></Slot>
              <Slot $ml={26}>
                <svg width="9" height="9" viewBox="0 0 9 9" fill="none"><path stroke="#fff" strokeWidth="1.300" d="M1 3h5v5H1z" /><path stroke="#9a9a9a" d="M3 .5h5.500V6" /></svg>
              </Slot>
              <Slot $ml={20}>
                <svg width="19" height="19" viewBox="0 0 19 19"><circle cx="9.500" cy="9.500" r="9.300" fill="#e34b17" /><path stroke="#fff" strokeWidth="1.600" d="M6 6l7 7M13 6l-7 7" /></svg>
              </Slot>
              <Slot $ml={8.500} />
            </WindowButtons>
          </TabStrip>

          <Toolbar>
            <Slot $ml={20}><Line d="M18.500 10H2M9 3l-7 7 7 7" /></Slot>
            <Slot $ml={25}><Line color="#8f8f8f" d="M1.500 10H18M11 3l7 7-7 7" /></Slot>
            <Slot $ml={25}><Line w={20} h={20} sw={1.700} d="M18.500 10a8.500 8.500 0 1 1-3.500-6.800"><path d="M18 2v5.500h-5.500z" fill="#f6f6f6" strokeWidth="1" /></Line></Slot>
            <Slot $ml={24.500}><Line w={20} h={20} d="M1 9.500 10 1l9 8.500M3 8v9.500q0 1.500 1.500 1.500h11q1.500 0 1.500-1.500V8M7.500 19v-5.500q0-2.500 2.500-2.500t2.500 2.500V19" /></Slot>
            <AddressBar>
              <Line w={19} h={20} d="M9.500 1c2.500 1.800 5 2.700 7.800 3.200C18 11 15 16.500 9.500 19 4 16.500 1 11 1.700 4.200 4.500 3.700 7 2.800 9.500 1z" />
              <Slot $ml={18}><Line w={14} h={18} sw={1.5} d="M3 1h5l4.500 4.500V15q0 2-2 2H3q-2 0-2-2V3q0-2 2-2z"><path d="M8 1v4.500h4.500z" fill="#f6f6f6" /></Line></Slot>
              <b>127.0.0.1</b>:8000/clash/mysubs/1
              <ZoomBadge>80%</ZoomBadge>
              <Line w={20} h={20} d="M10 1.200l2.700 5.600 6.100.8-4.500 4.200 1.200 6.100-5.500-3-5.500 3 1.200-6.100L1.200 7.600l6.100-.8z" />
            </AddressBar>
            <ExtensionRow>
              <span><Pocket /></span>
              <span><Download /></span>
              <span><LockShield /></span>
              <span><Spy /></span>
              <span><Megaphone /></span>
              <span><Grammarly /></span>
              <span><CheckShield /></span>
              <span><Bug /></span>
              <span><Line w={16} h={13} sw={1.600} d="M1 1.500h14M1 6.500h14M1 11.500h14" /></span>
            </ExtensionRow>
          </Toolbar>

          <BookmarksBar>
            {bookmarks.map((b, i) => (
              <Bookmark key={i} $w={b.w} $ls={b.ls}>
                <BookmarkIcon $gap={b.gap}>{b.icon}</BookmarkIcon>
                {b.label}
              </Bookmark>
            ))}
          </BookmarksBar>

          <Page>
            <NavBar>
              <Brand>Clash Logo</Brand>
              <Timer>TIMER</Timer>
              <NavLink>Question Hub</NavLink>
              <NavLink $ml={49}>Leaderboard</NavLink>
              <NavLink $ml={49}>Logout</NavLink>
              <Brand $ml={46}>Clash Logo</Brand>
            </NavBar>
            <Columns>
              <Submissions>
                <ProblemTabs>
                  {[1, 2, 3, 4, 5, 6].map((n) => (
                    <ProblemTab key={n} $active={n === 1}>Problem {n}</ProblemTab>
                  ))}
                </ProblemTabs>
                <HeadRow>
                  <Cell>Sr.No</Cell>
                  <Cell $ls={-0.9}>Time</Cell>
                  <Cell $ls={-0.85}>Accuracy</Cell>
                  <Cell $ls={-0.25}>Solution</Cell>
                </HeadRow>
                <BodyRow>
                  <Cell>1</Cell>
                  <Cell $ls={-0.48}>April 18, 2023, 5:54 p.m.</Cell>
                  <AccuracyTrack />
                  <ViewButton $w={114} $ml={79}>View</ViewButton>
                </BodyRow>
              </Submissions>
              <Stats>
                <StatsHead>
                  <Heading>
                    <HeadingLine $ls={-0.42}>Problem Statement</HeadingLine>
                    <HeadingLine $ls={-0.1}>Statistics</HeadingLine>
                  </Heading>
                  <ViewButton $w={115}>View</ViewButton>
                </StatsHead>
                <StatList>
                  <StatRow $ls={0.8}><span>AC</span><span>1</span></StatRow>
                  <StatRow $ls={0}><span>WA</span><span>2</span></StatRow>
                  <StatRow $ls={0.6}><span>TLE</span><span>3</span></StatRow>
                  <StatRow $ls={0.5}><span>RTE</span><span>1</span></StatRow>
                </StatList>
              </Stats>
            </Columns>
            <Footer>PISB ©</Footer>
          </Page>
        </Browser>
      </Desktop>
    </>
  );
}
